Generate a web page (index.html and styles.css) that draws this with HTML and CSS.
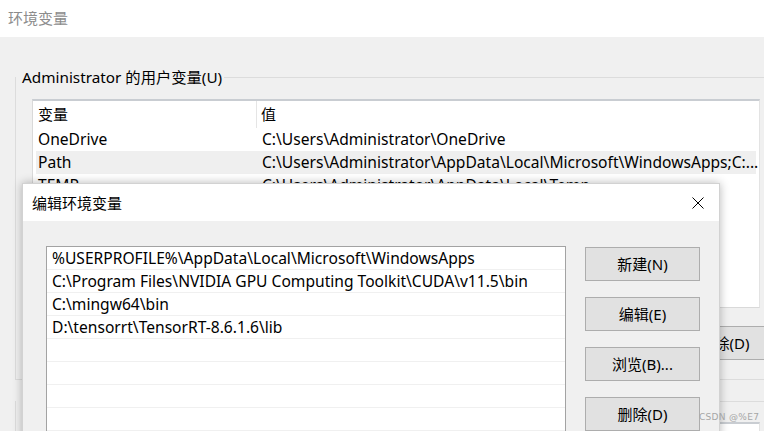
FILE: index.html
```html
<!DOCTYPE html>
<html lang="zh-CN">
<head>
<meta charset="utf-8">
<title>编辑环境变量</title>
<link rel="stylesheet" href="styles.css">
</head>
<body>
<div class="bgwin">
  <div class="titlebar">环境变量</div>
  <div class="client">
    <fieldset class="group">
      <legend>Administrator 的用户变量(U)</legend>
      <div class="varlist">
        <div class="vrow vhead"><div class="c1">变量</div><div class="c2">值</div></div>
        <div class="vrow"><div class="c1">OneDrive</div><div class="c2">C:\Users\Administrator\OneDrive</div></div>
        <div class="vrow sel"><div class="c1">Path</div><div class="c2">C:\Users\Administrator\AppData\Local\Microsoft\WindowsApps;C:...</div></div>
        <div class="vrow"><div class="c1">TEMP</div><div class="c2">C:\Users\Administrator\AppData\Local\Temp</div></div>
        <div class="vrow"><div class="c1">TMP</div><div class="c2">C:\Users\Administrator\AppData\Local\Temp</div></div>
      </div>
      <div class="btnrow">
        <div class="wbtn">新建(N)...</div>
        <div class="wbtn">编辑(E)...</div>
        <div class="wbtn">删除(D)</div>
      </div>
    </fieldset>
    <fieldset class="group sysgroup">
      <legend>系统变量(S)</legend>
      <div class="varlist syslist"></div>
    </fieldset>
  </div>
</div>

<div class="dialog">
  <div class="dtitle">
    <span>编辑环境变量</span>
    <svg class="close" width="12" height="12" viewBox="0 0 12 12"><path d="M0.5 0.5 L11.5 11.5 M11.5 0.5 L0.5 11.5" stroke="#000" stroke-width="1" fill="none"/></svg>
  </div>
  <div class="dbody">
    <div class="pathlist">
      <div class="prow">%USERPROFILE%\AppData\Local\Microsoft\WindowsApps</div>
      <div class="prow">C:\Program Files\NVIDIA GPU Computing Toolkit\CUDA\v11.5\bin</div>
      <div class="prow">C:\mingw64\bin</div>
      <div class="prow">D:\tensorrt\TensorRT-8.6.1.6\lib</div>
      <div class="prow"></div>
      <div class="prow"></div>
      <div class="prow"></div>
      <div class="prow"></div>
      <div class="prow"></div>
    </div>
    <div class="btncol">
      <div class="wbtn">新建(N)</div>
      <div class="wbtn">编辑(E)</div>
      <div class="wbtn">浏览(B)...</div>
      <div class="wbtn">删除(D)</div>
    </div>
  </div>
</div>

<div class="watermark">CSDN @%E7</div>
</body>
</html>
```

FILE: styles.css
```css
* { box-sizing: border-box; }

html, body {
  margin: 0;
  padding: 0;
}

body {
  width: 764px;
  height: 431px;
  overflow: hidden;
  position: relative;
  background: #f0f0f0;
  font-family: "Noto Sans", "Noto Sans CJK SC", sans-serif;
  font-size: 15px;
  color: #000;
}

.bgwin {
  width: 820px;
}

.titlebar {
  height: 37px;
  line-height: 37px;
  background: #fff;
  padding-left: 8px;
  color: #8c8c8c;
}

.client {
  padding-top: 30px;
}

.group {
  margin: 0 0 0 15px;
  padding: 12px 0 19px 16px;
  border: 1px solid #dcdcdc;
  min-width: 0;
}

.group legend {
  padding: 0 2px 0 6px;
  margin-left: -16px;
  line-height: 20px;
  height: 20px;
  font-size: 15.3px;
}

.varlist {
  width: 728px;
  height: 209px;
  background: #fff;
  border-top: 2px solid #c9cdd2;
  border-left: 1px solid #d9d9d9;
  border-right: 1px solid #e3e3e3;
  border-bottom: 1px solid #d9d9d9;
  overflow: hidden;
}

.vrow {
  display: flex;
  height: 23px;
  line-height: 23px;
  margin: 0 3px;
  white-space: nowrap;
  font-size: 15.6px;
}

.vrow .c1 {
  width: 222px;
  padding-left: 2px;
  flex: none;
}

.vrow .c2 {
  padding-left: 4px;
}

.vrow.vhead {
  margin: 0;
  height: 27px;
  line-height: 27px;
  font-size: 15px;
}

.vrow.vhead .c1 {
  width: 224px;
  padding-left: 5px;
  border-right: 1px solid #e5e5e5;
}

.vrow.sel {
  background: #efefef;
}

.btnrow {
  display: flex;
  justify-content: flex-end;
  gap: 8px;
  width: 750px;
  margin-top: 18px;
}

.wbtn {
  width: 115px;
  height: 34px;
  line-height: 32px;
  text-align: center;
  background: #e1e1e1;
  border: 1px solid #adadad;
  white-space: nowrap;
}

.sysgroup {
  margin-top: 11px;
  padding-top: 11px;
}

.syslist {
  height: 60px;
}

/* dialog overlay */
.dialog {
  position: absolute;
  left: 22px;
  top: 183px;
  width: 698px;
  height: 270px;
  background: #f0f0f0;
  border: 1px solid rgba(0, 0, 0, 0.12);
  box-shadow: 0 0 9px rgba(0, 0, 0, 0.28);
}

.dtitle {
  height: 37px;
  background: #fff;
  display: flex;
  align-items: center;
  justify-content: space-between;
  padding: 0 15px 0 9px;
}

.dtitle span {
  line-height: 20px;
}

.close {
  display: block;
  margin-top: 1px;
}

.dbody {
  display: flex;
  align-items: flex-start;
  padding: 25px 0 0 23px;
}

.pathlist {
  width: 520px;
  height: 220px;
  background: #fff;
  border: 1px solid #a3a3a3;
  border-bottom: none;
}

.prow {
  height: 23px;
  line-height: 22px;
  padding-left: 5px;
  border-bottom: 1px solid #f0f0f0;
  white-space: nowrap;
  font-size: 15.6px;
}

.btncol {
  display: flex;
  flex-direction: column;
  gap: 16px;
  margin-left: 19px;
  margin-top: 1px;
}

.watermark {
  position: absolute;
  left: 699px;
  top: 412px;
  font-family: "DejaVu Sans", sans-serif;
  font-size: 9px;
  color: #a6a6a6;
  letter-spacing: 0.3px;
}
```
